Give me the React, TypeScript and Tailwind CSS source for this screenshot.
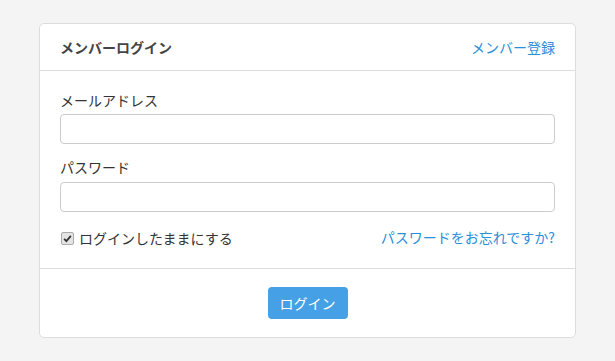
export default function App() {
  return (
    <div
      className="min-h-[361px] bg-[#f4f4f4] pt-[23px] text-[14px] text-[#333]"
      style={{ fontFamily: '"Noto Sans CJK JP", "Noto Sans", sans-serif' }}
    >
      <div className="mx-auto w-[537px] rounded-[5px] border border-[#dddddd] bg-white">
        {/* Header */}
        <div className="flex h-[47px] items-center justify-between border-b border-[#dddddd] px-[20px]">
          <h1 className="font-bold text-[#444]">メンバーログイン</h1>
          <a className="text-[#2b8fd8]">メンバー登録</a>
        </div>

        {/* Body */}
        <div className="px-[20px] pt-[19px] pb-[20px]">
          <label className="block leading-[20px] mb-[4px]">メールアドレス</label>
          <input
            type="text"
            className="block h-[30px] w-full rounded-[4px] border border-[#cccccc] bg-white"
          />
          <label className="mt-[13px] block leading-[20px] mb-[5px]">パスワード</label>
          <input
            type="password"
            className="block h-[30px] w-full rounded-[4px] border border-[#cccccc] bg-white"
          />
          <div className="mt-[16px] flex h-[20px] items-center justify-between">
            <label className="flex items-center gap-[5px]">
              <span className="ml-[1px] flex h-[13px] w-[13px] items-center justify-center rounded-[2px] border border-[#aaa] bg-[#e4e4e4]">
                <svg viewBox="0 0 12 12" className="h-[9px] w-[9px]">
                  <path d="M1.5 6.5 L4.5 9.5 L10.5 2.5" fill="none" stroke="#333" strokeWidth="2.4" />
                </svg>
              </span>
              <span>ログインしたままにする</span>
            </label>
            <a className="text-[#2b8fd8] -mt-[2px]">パスワードをお忘れですか?</a>
          </div>
        </div>

        {/* Footer */}
        <div className="flex justify-center border-t border-[#dddddd] py-[18px]">
          <button className="h-[32px] w-[80px] rounded-[4px] bg-[#45a0e6] text-white">ログイン</button>
        </div>
      </div>
    </div>
  )
}
